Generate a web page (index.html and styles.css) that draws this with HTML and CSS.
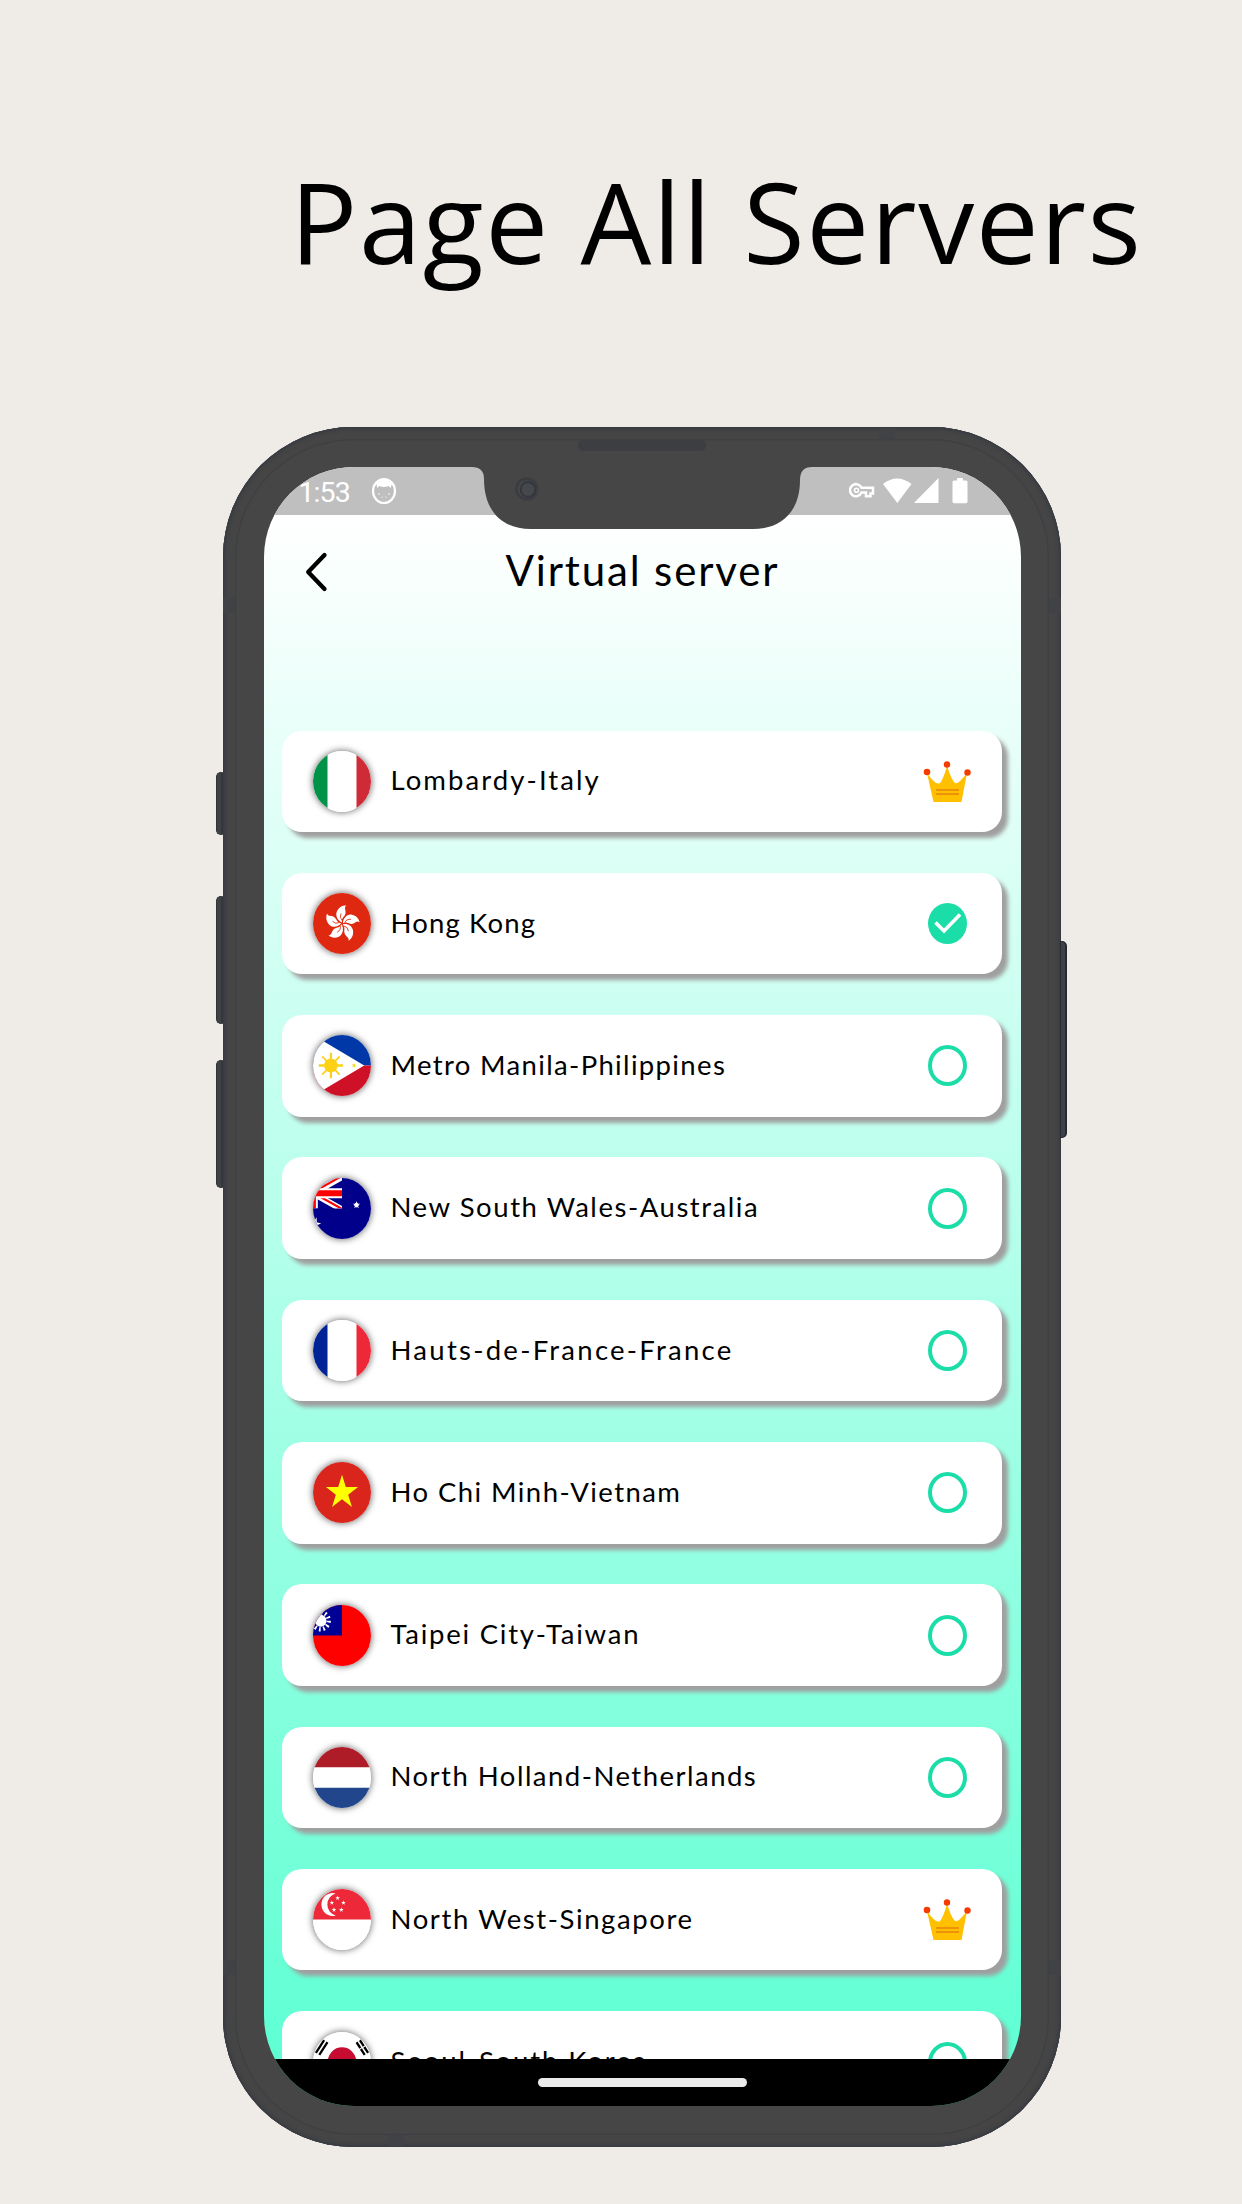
FILE: index.html
```html
<!DOCTYPE html>
<html lang="en">
<head>
<meta charset="utf-8">
<title>Page All Servers</title>
<link rel="stylesheet" href="styles.css">
</head>
<body>
<svg class="defs" aria-hidden="true">
  <defs>
    <path id="star" d="M0 -10 2.25 -3.1 9.5 -3.1 3.63 1.2 5.88 8.1 0 3.8 -5.88 8.1 -3.63 1.2 -9.5 -3.1 -2.25 -3.1Z"/>
    <path id="petal" d="M0 -1 C-4.500 -2.500 -7.500 -8 -5 -12.500 C-3 -16.500 1 -18 4.500 -17.700 C1.500 -15.500 4.500 -13 3.500 -9.500 C2.800 -6.500 -.5 -6 0 -1Z"/>
    <g id="crown"><path fill="#ffc000" d="M4 12 Q13 25 17 22 Q20 19 24 5 Q29 20 32 22 Q35 24 44 12 L38.5 41 H10.5Z"/><g fill="#f43b00"><circle cx="4" cy="11" r="3.3"/><circle cx="24" cy="3.5" r="3.2"/><circle cx="44.5" cy="11.5" r="3.2"/></g><path stroke="#e8820c" stroke-width="1.7" d="M13 29h23M13 33h23"/></g>
    <g id="ring"><ellipse cx="24.500" cy="20.500" rx="17.500" ry="18.600" fill="none" stroke="#1bdda8" stroke-width="4"/></g>
  </defs>
</svg>
<h1 class="page-title">Page All Servers</h1>
<div class="phone">
  <i class="button mute"></i><i class="button vol-up"></i><i class="button vol-down"></i><i class="button power"></i>
  <i class="band band-top"></i><i class="band band-bottom"></i><i class="band band-lt"></i><i class="band band-rt"></i><i class="band band-lb"></i><i class="band band-rb"></i>
  <i class="speaker"></i>
  <div class="screen">
    <svg class="notch" viewBox="0 0 342 63"><path fill="#464646" d="M0 -1 V0 H2 Q14 0 14 12 C14 43 31 62 61 62 H283 C313 62 330 43 330 13 Q330 0 342 0 V-1Z"/><circle cx="57" cy="22" r="12" fill="#404144"/><circle cx="56.500" cy="22" r="10" fill="#454648" stroke="#3a3c41" stroke-width="2"/><circle cx="58" cy="22.500" r="7.300" fill="#46484d" stroke="#34373e" stroke-width="2"/></svg>
    <div class="status">
      <span class="time">1:53</span>
      <svg class="face" width="26" height="28" viewBox="0 0 26 28"><ellipse cx="13" cy="14" rx="11" ry="12" fill="none" stroke="#fff" stroke-width="2.2"/><path fill="#fff" d="M6 11 Q6 6 4 7 Q9 1 13 1.500 Q20 2 22 7 Q20 7 20 11 L17.500 9 Q13 11 8.500 9Z"/><g fill="#fff"><circle cx="8" cy="17" r=".8"/><circle cx="18" cy="17" r=".8"/><circle cx="11" cy="20" r=".6"/><circle cx="15" cy="20" r=".6"/></g></svg>
      <svg class="signals" width="122" height="28" viewBox="0 0 122 28"><g fill="none" stroke="#fff" stroke-width="2.500"><path d="M12.500 10.800 H24 V16.500 H21.500 V19.300 H17 V15.500 H12.500 A6 6 0 1 1 12.500 10.800Z"/><circle cx="7.500" cy="13.300" r="2" stroke-width="1.600"/></g><path fill="#fff" d="M34 7 Q48 -4 62.500 7 L48.300 26Z M65 26 H89.500 V1Z"/><path fill="#fff" d="M108 2 Q108 1 109 1 H113 Q114 1 114 2 V3.500 H117 Q118.500 3.500 118.500 5 V24.500 Q118.500 26.200 117 26.200 H105 Q103.500 26.200 103.500 24.500 V5 Q103.500 3.500 105 3.500 H108Z"/></svg>
    </div>
    <header class="header">
      <svg width="24" height="42" viewBox="0 0 24 42"><path fill="none" stroke="#000" stroke-width="4.300" stroke-linecap="round" stroke-linejoin="round" d="M20.500 4 L4.200 21 L20.500 38"/></svg>
      <h2>Virtual server</h2>
    </header>
    <ul class="servers">
      <li><svg class="flag" viewBox="0 0 60 60" preserveAspectRatio="none"><path fill="#fff" d="M0 0h60v60H0z"/><path fill="#009246" d="M0 0h15v60H0z"/><path fill="#ce2b37" d="M45 0h15v60H45z"/></svg><span class="t1">Lombardy-Italy</span><svg class="mark"><use href="#crown"/></svg></li>
      <li><svg class="flag" viewBox="0 0 60 60" preserveAspectRatio="none"><path fill="#de2910" d="M0 0h60v60H0z"/><g fill="#fff" transform="translate(30 30)"><use href="#petal"/><use href="#petal" transform="rotate(72)"/><use href="#petal" transform="rotate(144)"/><use href="#petal" transform="rotate(216)"/><use href="#petal" transform="rotate(288)"/></g><g fill="none" stroke="#de2910" stroke-width=".8" transform="translate(30 30)"><path id="vein" d="M0 -3 Q-3 -6 -1 -10"/><use href="#vein" transform="rotate(72)"/><use href="#vein" transform="rotate(144)"/><use href="#vein" transform="rotate(216)"/><use href="#vein" transform="rotate(288)"/></g></svg><span class="t2">Hong Kong</span><svg class="mark"><ellipse cx="24.500" cy="20.500" rx="19.500" ry="20.500" fill="#1bdda8"/><path fill="none" stroke="#fff" stroke-width="3.600" d="M12.500 19.500 L21 28 L37 11.500"/></svg></li>
      <li><svg class="flag" viewBox="0 0 60 60" preserveAspectRatio="none"><path fill="#0038a8" d="M0 0h60v30H0z"/><path fill="#ce1126" d="M0 30h60v30H0z"/><path fill="#fff" d="M0 0 L53 30 L0 60z"/><g transform="translate(18.500 30)" stroke="#fcd116"><circle r="6.500" fill="#fcd116"/><path stroke-width="2.300" d="M0 -12.500V12.500M-12.500 0H12.500"/><path stroke-width="1.800" d="M-9 -9 9 9M9 -9 -9 9"/></g><use href="#star" fill="#fcd116" transform="translate(42.500 30) rotate(90) scale(.27)"/></svg><span class="t3">Metro Manila-Philippines</span><svg class="mark"><use href="#ring"/></svg></li>
      <li><svg class="flag" viewBox="0 0 60 60" preserveAspectRatio="none"><path fill="#00008b" d="M0 0h60v60H0z"/><svg width="30" height="30"><path stroke="#fff" stroke-width="6" d="M0 15 30 -1M0 15 30 31"/><path stroke="#f00" stroke-width="2" d="M0 14 30 -2M0 14.500 30 30.500"/><path stroke="#fff" stroke-width="10" d="M0 0V30M0 15H30"/><path stroke="#f00" stroke-width="6" d="M0 0V30M0 15H30"/></svg><g fill="#fff"><use href="#star" transform="translate(45 26.500) scale(.4)"/><use href="#star" transform="translate(45 26.500) rotate(36) scale(.3)"/><use href="#star" transform="translate(2 45) rotate(15) scale(.65)"/></g></svg><span class="t4">New South Wales-Australia</span><svg class="mark"><use href="#ring"/></svg></li>
      <li><svg class="flag" viewBox="0 0 60 60" preserveAspectRatio="none"><path fill="#fff" d="M0 0h60v60H0z"/><path fill="#002395" d="M0 0h15v60H0z"/><path fill="#ed2939" d="M45 0h15v60H45z"/></svg><span class="t5">Hauts-de-France-France</span><svg class="mark"><use href="#ring"/></svg></li>
      <li><svg class="flag" viewBox="0 0 60 60" preserveAspectRatio="none"><path fill="#da251d" d="M0 0h60v60H0z"/><use href="#star" fill="#ff0" transform="translate(30 30) scale(1.75)"/></svg><span class="t6">Ho Chi Minh-Vietnam</span><svg class="mark"><use href="#ring"/></svg></li>
      <li><svg class="flag" viewBox="0 0 60 60" preserveAspectRatio="none"><path fill="#f00" d="M0 0h60v60H0z"/><path fill="#000095" d="M0 0h30v30H0z"/><g transform="translate(8 15.500)"><circle r="6" fill="#fff"/><circle r="8.300" fill="none" stroke="#fff" stroke-width="4.400" stroke-dasharray="1.700 2.646"/></g></svg><span class="t7">Taipei City-Taiwan</span><svg class="mark"><use href="#ring"/></svg></li>
      <li><svg class="flag" viewBox="0 0 60 60" preserveAspectRatio="none"><path fill="#fff" d="M0 0h60v60H0z"/><path fill="#ae1c28" d="M0 0h60v20H0z"/><path fill="#21468b" d="M0 40h60v20H0z"/></svg><span class="t8">North Holland-Netherlands</span><svg class="mark"><use href="#ring"/></svg></li>
      <li><svg class="flag" viewBox="0 0 60 60" preserveAspectRatio="none"><path fill="#fff" d="M0 0h60v60H0z"/><path fill="#ed2939" d="M0 0h60v30H0z"/><path fill="#fff" d="M23.500 4.500 A11.300 11.300 0 1 0 23.500 26 A11 11 0 0 1 23.500 4.500Z"/><g fill="#fff"><use href="#star" transform="translate(25.500 9) scale(.25)"/><use href="#star" transform="translate(19.500 13.500) scale(.25)"/><use href="#star" transform="translate(31.500 13.500) scale(.25)"/><use href="#star" transform="translate(21.700 20.500) scale(.25)"/><use href="#star" transform="translate(29.300 20.500) scale(.25)"/></g></svg><span class="t9">North West-Singapore</span><svg class="mark"><use href="#crown"/></svg></li>
      <li><svg class="flag" viewBox="0 0 60 60" preserveAspectRatio="none"><path fill="#fff" d="M0 0h60v60H0z"/><circle cx="30" cy="30" r="15" fill="#c60c30"/><path stroke="#000" stroke-width="2.400" d="M3 20.500 11.500 8M6.500 22.500 15 10"/><path stroke="#000" stroke-width="2.400" stroke-dasharray="7 1" d="M57 20.500 48.500 8M53.500 22.500 45 10"/></svg><span class="t10">Seoul-South Korea</span><svg class="mark"><use href="#ring"/></svg></li>
    </ul>
    <div class="nav"><i></i></div>
  </div>
</div>
</body>
</html>
```
FILE: styles.css
```css
* { box-sizing: border-box; }
html { background: #efebe6; }
body {
  margin: 0;
  width: 1242px;
  height: 2204px;
  overflow: hidden;
  background: #efebe6;
  color: #000;
}
.defs { position: absolute; width: 0; height: 0; }

.page-title {
  margin: 0;
  padding: 144px 0 0 290px;
  height: 427px;
  font: 400 112px/153px "Open Sans", sans-serif;
  letter-spacing: 1.6px;
  white-space: nowrap;
}

.phone {
  position: relative;
  width: 838px;
  height: 1720px;
  margin-left: 223px;
  padding: 40px 40.5px 41px;
  border-radius: 130px;
  background: #464646;
  box-shadow: inset 0 0 4px 1px #303640, inset 0 0 0 12px #454545, inset 0 0 0 13.5px #3e4043;
}
.button {
  position: absolute;
  left: -7px;
  width: 7px;
  background: #3f4145;
  border: 1px solid #2f333a;
  border-right: 2px solid #34373c;
  border-radius: 5px 0 0 5px;
}
.mute { top: 345px; height: 63px; }
.vol-up { top: 469px; height: 128px; }
.vol-down { top: 633px; height: 128px; }
.power {
  top: 514px;
  left: auto;
  right: -6px;
  height: 197px;
  border-color: #252b34;
  border-radius: 0 5px 5px 0;
}
.band { position: absolute; width: 12px; height: 15px; background: #404245; }
.band-top { top: 1px; left: 656px; width: 16px; height: 11px; }
.band-bottom { bottom: 1px; left: 165px; width: 16px; height: 11px; }
.band-lt { top: 171px; left: 0; }
.band-rt { top: 171px; right: 0; }
.band-lb { bottom: 172px; left: 0; }
.band-rb { bottom: 172px; right: 0; }
.speaker {
  position: absolute;
  top: 13px;
  left: 355px;
  width: 128px;
  height: 11px;
  border-radius: 6px;
  background: #3d3e42;
}

.screen {
  position: relative;
  display: flex;
  flex-direction: column;
  height: 1639px;
  overflow: hidden;
  border-radius: 90px;
  background: linear-gradient(#fff 48px, #5affd2 1639px);
}
.notch { position: absolute; top: 0; left: 206.5px; width: 342px; height: 63px; }

.status {
  display: flex;
  align-items: center;
  flex: none;
  height: 48px;
  padding-left: 35px;
  background: #bfbfbf;
  color: #fff;
}
.time { width: 72px; padding-top: 3px; font: 400 28.5px/45px Roboto, sans-serif; letter-spacing: -.9px; }
.signals { margin-left: 452px; }

.header { display: flex; align-items: center; flex: none; height: 114px; padding-left: 40.5px; }
.header h2 {
  width: 400px;
  margin: -5px 0 0 177.5px;
  font: 400 42px/50px Lato, sans-serif;
  letter-spacing: 1.85px;
  white-space: nowrap;
}

.servers {
  flex: 1;
  min-height: 0;
  overflow: hidden;
  margin: 0;
  padding: 101.6px 19px 0 18.5px;
  list-style: none;
}
.servers li {
  display: flex;
  align-items: center;
  height: 101.5px;
  margin-bottom: 40.8px;
  padding: 0 29.5px 0 30.5px;
  border-radius: 20px;
  background: #fff;
  box-shadow: 6px 6px 4px #9f9f9f;
  font: 400 27.5px/40px Lato, sans-serif;
  white-space: nowrap;
}
.servers span { flex: 1; margin: -2px 0 0 20px; }
.flag { width: 58px; height: 61px; border-radius: 50%; box-shadow: 0 0 6px 1px rgba(0, 0, 0, .5); }
.mark { width: 49px; height: 41px; overflow: visible; }

/* Tracking tuned for each name */
.t1 { letter-spacing: 2.08px; }
.t2 { letter-spacing: 1.15px; }
.t3 { letter-spacing: 1.35px; }
.t4 { letter-spacing: 1.55px; }
.t5 { letter-spacing: 2.27px; }
.t6 { letter-spacing: 1.43px; }
.t7 { letter-spacing: 1.75px; }
.t8 { letter-spacing: 1.48px; }
.t9 { letter-spacing: 1.6px; }
.t10 { letter-spacing: 1.9px; }

.nav {
  display: flex;
  align-items: center;
  justify-content: center;
  flex: none;
  height: 47.5px;
  background: #000;
}
.nav i { width: 209px; height: 9px; border-radius: 4.5px; background: #ebebeb; }
```
